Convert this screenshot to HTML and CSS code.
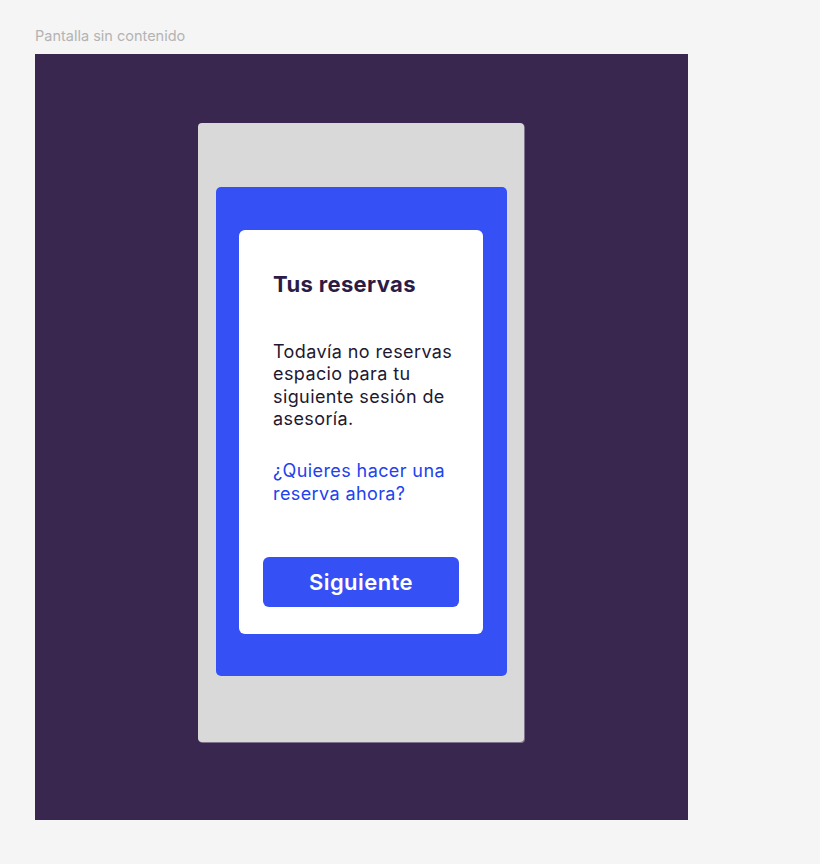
FILE: index.html
```html
<!DOCTYPE html>
<html lang="es">
<head>
<meta charset="utf-8">
<title>Pantalla sin contenido</title>
<link rel="stylesheet" href="styles.css">
</head>
<body>
  <div class="label">Pantalla sin contenido</div>
  <div class="frame">
    <div class="phone">
      <div class="blue">
        <div class="card">
          <h1 class="title">Tus reservas</h1>
          <p class="text">Todavía no reservas espacio para tu siguiente sesión de asesoría.</p>
          <p class="link">¿Quieres hacer una reserva ahora?</p>
          <button class="btn">Siguiente</button>
        </div>
      </div>
    </div>
  </div>
</body>
</html>
```

FILE: styles.css
```css
* { box-sizing: border-box; }
html, body { margin: 0; }
body {
  background: #f5f5f5;
  padding: 27px 0 0 35px;
  font-family: Inter, "Noto Sans", sans-serif;
}
.label {
  font-size: 14.5px;
  line-height: 17px;
  color: #b3b3b3;
  margin-bottom: 10px;
}
.frame {
  width: 653px;
  height: 766px;
  background: #3a274f;
  padding: 69px 0 0 163px;
}
.phone {
  width: 326px;
  height: 619px;
  background: #d9d9d9;
  border-radius: 4px;
  padding: 64px 0 0 18px;
  box-shadow: 1px 1px 0 rgba(255,255,255,0.35);
}
.blue {
  width: 291px;
  height: 489px;
  background: #3551f5;
  border-radius: 5px;
  padding: 43px 0 0 23px;
}
.card {
  width: 244px;
  height: 404px;
  background: #ffffff;
  border-radius: 6px;
  padding: 40.5px 20px 0 34px;
  display: flex;
  flex-direction: column;
}
.title {
  margin: 0;
  font-size: 22px;
  line-height: 26.4px;
  font-weight: 700;
  letter-spacing: 0.35px;
  color: #2c1b47;
}
.text {
  margin: 43.6px 0 0;
  font-size: 18px;
  line-height: 22.6px;
  letter-spacing: 0.4px;
  color: #1e1831;
}
.link {
  margin: 29.3px 0 0;
  font-size: 18px;
  line-height: 22.6px;
  letter-spacing: 0.4px;
  color: #2142ee;
}
.btn {
  margin: 51.6px 0 0 -10px;
  width: 196px;
  height: 50px;
  border: none;
  border-radius: 6px;
  background: #3551f5;
  color: #ffffff;
  font-family: Inter, "Noto Sans", sans-serif;
  font-size: 22px;
  font-weight: 600;
  letter-spacing: 0.45px;
  line-height: 50px;
  padding: 0;
}
```
